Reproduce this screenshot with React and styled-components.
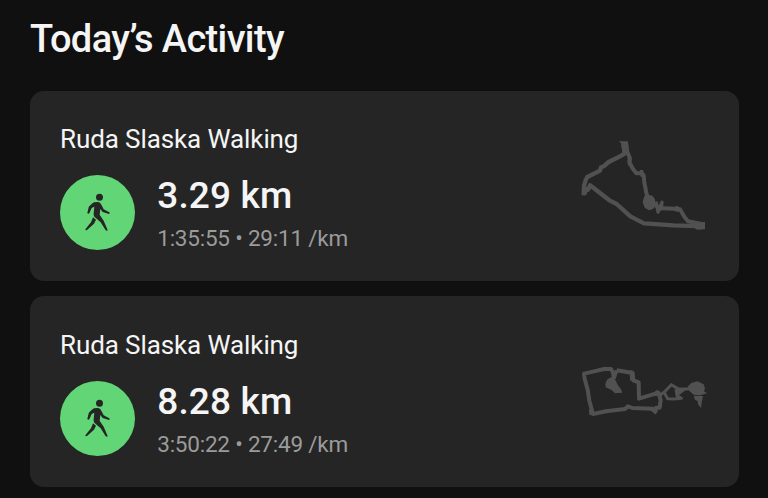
import React from 'react'
import styled, { createGlobalStyle } from 'styled-components'

const GlobalStyle = createGlobalStyle`
    * {
        box-sizing: border-box;
    }
    body {
        margin: 0;
        background: #101010;
        font-family: Roboto, sans-serif;
        color: #f5f5f5;
    }
`

const Page = styled.main`
    height: 498px;
    padding: 17px 29px 0 30px;
    overflow: hidden;
`

const Heading = styled.h1`
    margin: 0 0 28.8px;
    font-size: 38px;
    line-height: 45px;
    font-weight: 500;
    letter-spacing: -0.64px;
`

const List = styled.div`
    display: flex;
    flex-direction: column;
    gap: 15.3px;
`

const Card = styled.article`
    display: flex;
    align-items: center;
    justify-content: space-between;
    height: 190.4px;
    padding: 0.8px 33px 0 30px;
    border-radius: 14px;
    background: #252525;
`

const Info = styled.div`
    display: flex;
    flex-direction: column;
    gap: 20px;
`

const Name = styled.h2`
    margin: 0;
    font-size: 26px;
    line-height: 32px;
    font-weight: 400;
    letter-spacing: -0.1px;
`

const Summary = styled.div`
    display: flex;
    align-items: center;
    gap: 22.5px;
`

const Badge = styled.div`
    width: 75px;
    height: 75px;
    margin-left: -0.3px;
    border-radius: 50%;
    background: #62d576;
`

const Stats = styled.div`
    display: flex;
    flex-direction: column;
`

const Distance = styled.strong`
    font-size: 37px;
    line-height: 42px;
    font-weight: 500;
    letter-spacing: 0.15px;
`

const Pace = styled.span`
    margin-top: 10px;
    font-size: 22.5px;
    line-height: 23px;
    letter-spacing: -0.22px;
    color: #9b9b9b;
`

const Route = styled.svg`
    width: 124px;
    height: 124px;
    overflow: visible;
    fill: none;
    stroke: #515151;
    stroke-width: 13;
    stroke-linejoin: round;
`

const Walker = styled.svg`
    display: block;
    width: 75px;
    height: 75px;
    fill: #252525;
`

const WalkIcon = () => (
    <Walker viewBox="29 15 225 225">
        <circle cx="147.500" cy="82" r="10.500" />
        <path d="M131 97 L143 96 Q150 97 153 104 L160 118 L177 127 Q180 130 176 132 L157 126 L150 117 L148 134 L160 152 L172 180 Q171 184 166 181 L151 157 L132 140 Q129 136 130 130 L132 110 L124 114 L117 130 Q113 133 111 129 L115 112 Q117 107 131 97 Z" />
        <path d="M128 142 L137 149 L131 161 L110 180 Q105 182 105 178 L122 157 Z" />
    </Walker>
)

const LongRoute = () => (
    <Route viewBox="36 -16 372 372">
        <path d="M41 198 L42 170 L47 152 L52 143 L90 124 L93 114 L101 111 L116 98 L150 81 L165 72 L159 44" />
        <path d="M168 38 L171 65 L179 85 L178 99 L189 119 L199 132 L214 131 L221 138 L223 160 L228 185 L235 216 L264 232 L280 237 L313 238 L330 240 L344 264 L354 276 L398 285" strokeWidth="12" />
        <path d="M43 195 L48 179 L54 181 L60 168 L68 174 L120 214 L140 224 L181 261 L222 282 L310 288 L403 291" />
        <path d="M180 84 L179 109 M215 122 L216 142 M258 217 L264 248 L276 219 L273 243" strokeWidth="10" />
        <path fill="#515151" stroke="none" d="M147 36 L173 36 L178 70 L163 78 L156 67 L158 48 Z M223 201 L234 196 L247 199 L255 210 L257 230 L249 239 L237 243 L224 235 L218 218 Z M310 234 L322 229 L334 239 L324 248 L313 245 Z M368 280 L405 278 L405 300 L382 301 L368 294 Z" />
    </Route>
)

const CityRoute = () => (
    <Route viewBox="36 -60 372 372">
        <path strokeWidth="12" d="M132 86 L129 68 L123 57 L102 57 L72 64 L42 71 L44 86 L53 119 L58 152 L69 192 L108 184 L165 177 L174 169 L187 174 L248 176 L257 183 L258 173 L269 173 L272 151 L266 128 L207 146 L206 97 L190 91 L188 69 L140 61" />
        <path strokeWidth="11" d="M140 61 L132 84 L116 92 L111 108" />
        <path strokeWidth="9" d="M61 178 L63 195 M183 61 L185 92 M245 178 L259 190 M258 122 L273 142 M269 137 L284 125 L304 104 L326 117 L349 117 L372 115 M284 130 L293 146 L313 147 L334 145 L321 137 L318 118 M326 112 L324 132 L343 118" />
        <path fill="#515151" stroke="none" d="M107 97 L122 86 L137 91 L143 104 L153 118 L157 128 L135 130 L125 120 L107 112 Z M354 109 L365 98 L383 94 L401 103 L405 115 L402 124 L411 130 L391 136 L371 134 L356 121 Z M371 137 L399 138 L396 152 L393 174 L384 163 L383 153 L375 150 Z" />
    </Route>
)

const activities = [
    { id: 1, name: 'Ruda Slaska Walking', distance: '3.29 km', pace: '1:35:55 • 29:11 /km', route: <LongRoute /> },
    { id: 2, name: 'Ruda Slaska Walking', distance: '8.28 km', pace: '3:50:22 • 27:49 /km', route: <CityRoute /> },
]

const ActivityCard = ({ activity }) => (
    <Card>
        <Info>
            <Name>{activity.name}</Name>
            <Summary>
                <Badge><WalkIcon /></Badge>
                <Stats>
                    <Distance>{activity.distance}</Distance>
                    <Pace>{activity.pace}</Pace>
                </Stats>
            </Summary>
        </Info>
        {activity.route}
    </Card>
)

export default function App() {
    return (
        <>
            <GlobalStyle />
            <Page>
                <Heading>Today’s Activity</Heading>
                <List>
                    {activities.map((activity) => (
                        <ActivityCard key={activity.id} activity={activity} />
                    ))}
                </List>
            </Page>
        </>
    )
}
